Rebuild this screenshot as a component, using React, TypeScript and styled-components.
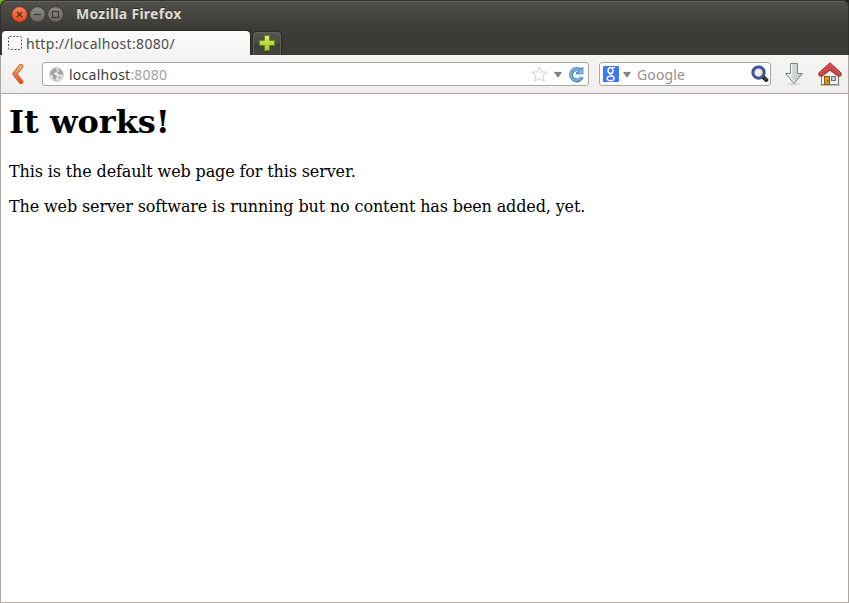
import React from "react";
import styled, { createGlobalStyle } from "styled-components";

const GlobalStyle = createGlobalStyle`
  *, *::before, *::after { box-sizing: border-box; }
  html, body { margin: 0; padding: 0; background: #fff; }
  svg { display: block; flex: none; }
`;

const Window = styled.div`
  width: 849px;
  height: 603px;
  display: flex;
  flex-direction: column;
  overflow: hidden;
  background: linear-gradient(135deg, #73b71b 0 5px, #242522 6px);
  font-family: "Noto Sans", "Open Sans", sans-serif;
`;

const Chrome = styled.div`
  height: 55px;
  flex: none;
  border: 1px solid #31302c;
  border-bottom: 0;
  border-radius: 6px 6px 0 0;
  background: linear-gradient(#64635b 0 1px, #504f49 1px, #3c3b37 27px);
`;

const TitleBar = styled.header`
  height: 27px;
  display: flex;
  align-items: center;
  padding-left: 10px;
`;

const Controls = styled.div`
  display: flex;
  gap: 1px;
`;

const Label = styled.span<{ $size: number; $spacing?: number; $color: string; $bold?: boolean }>`
  font-size: ${(p) => p.$size}px;
  line-height: 20px;
  letter-spacing: ${(p) => p.$spacing ?? 0}px;
  color: ${(p) => p.$color};
  font-weight: ${(p) => (p.$bold ? 700 : 400)};
  white-space: pre;
`;

const Title = styled(Label)`
  margin: -2px 0 0 12px;
  text-shadow: 0 -1px #302f2b;
`;

const FieldText = styled(Label)`
  padding-top: 2px;
`;

const TabStrip = styled.nav`
  height: 27px;
  display: flex;
  align-items: flex-end;
  gap: 3px;
  padding-left: 1px;
`;

const Tab = styled.div`
  width: 248px;
  height: 24px;
  display: flex;
  align-items: center;
  gap: 4px;
  padding: 0 5px;
  border-top: 1px solid #fff;
  border-radius: 4px 4px 0 0;
  background: linear-gradient(#fbfbfb, #f5f4f2);
  box-shadow: 1px -1px 1px #282824;
`;

const NewTab = styled.div`
  width: 28px;
  height: 23px;
  display: flex;
  align-items: flex-start;
  justify-content: flex-start;
  padding: 2px 0 0 5px;
  border: 1px solid #64625c;
  border-bottom: 0;
  border-radius: 4px 4px 0 0;
  background: linear-gradient(#57564f 0, #494842 50%, #3e3d38 50%, #44433e);
  box-shadow: 0 0 1px 1px #2b2a26;
`;

const ToolBar = styled.div`
  height: 39px;
  flex: none;
  display: flex;
  align-items: center;
  padding: 0 6px 0 10px;
  border: solid #aea79f;
  border-width: 0 1px 1px;
  background: linear-gradient(#f6f5f3, #f0efee);
`;

const Field = styled.div<{ $width: number; $left: number }>`
  width: ${(p) => p.$width}px;
  height: 24px;
  margin-left: ${(p) => p.$left}px;
  display: flex;
  align-items: center;
  border: 1px solid #aaa7a1;
  border-radius: 3px;
  background: #fff;
`;

const Grow = styled.div`
  flex: 1;
`;

const Gap = styled.div<{ $w: number }>`
  width: ${(p) => p.$w}px;
  flex: none;
`;

const Page = styled.main`
  flex: 1;
  padding: 9px 8px 8px;
  border: solid #aea79f;
  border-width: 0 1px 1px;
  background: #fff;
  color: #000;
  font: 16px/19px "DejaVu Serif", serif;
`;

const Heading = styled.h1`
  margin: 0 0 21px;
  font-size: 32px;
  line-height: 38px;
  font-weight: 700;
`;

const Paragraph = styled.p`
  margin: 0 0 16px;
  letter-spacing: -0.13px;
`;

type Kind = "close" | "minimize" | "maximize";

const WindowButton = ({ kind }: { kind: Kind }) => {
  const close = kind === "close";
  return (
    <svg width="17" height="17" viewBox="0 0 17 17">
      <defs>
        <linearGradient id={`wb-${kind}`} x2="0" y2="1">
          <stop offset="0" stopColor={close ? "#f7855f" : "#8f8d84"} />
          <stop offset="1" stopColor={close ? "#df4a16" : "#66655e"} />
        </linearGradient>
      </defs>
      <circle cx="8.5" cy="8.5" r="7.8" fill={`url(#wb-${kind})`} stroke={close ? "#66301f" : "#33322e"} strokeWidth=".8" />
      <g fill="none" stroke={close ? "#54200f" : "#383732"} strokeWidth="1.2">
        {close && <path d="M5.8 5.8l5.4 5.4M11.2 5.8l-5.4 5.4" />}
        {kind === "minimize" && <path d="M5 8.5h7" />}
        {kind === "maximize" && <rect x="5.5" y="5.5" width="6" height="6" />}
      </g>
    </svg>
  );
};

const PlusIcon = () => (
  <svg width="17" height="17" viewBox="0 0 17 17">
    <defs>
      <linearGradient id="plus" x2="0" y2="1">
        <stop offset="0" stopColor="#e2ee78" />
        <stop offset=".5" stopColor="#bcd545" />
        <stop offset="1" stopColor="#a2c52f" />
      </linearGradient>
    </defs>
    <path d="M5.5.5h5v5h5v5h-5v5h-5v-5h-5v-5h5z" fill="url(#plus)" stroke="#5b8a16" />
  </svg>
);

const BackIcon = () => (
  <svg width="14" height="20" viewBox="0 0 14 20">
    <defs>
      <linearGradient id="back" x2="0" y2="1">
        <stop offset="0" stopColor="#f6ad73" />
        <stop offset="1" stopColor="#e9541c" />
      </linearGradient>
    </defs>
    <path d="M10 2.2L3.8 9.9l6.2 7.9" fill="none" stroke="#c35724" strokeWidth="4.6" strokeLinecap="round" strokeLinejoin="round" />
    <path d="M10 2.2L3.8 9.9l6.2 7.9" fill="none" stroke="url(#back)" strokeWidth="3.1" strokeLinecap="round" strokeLinejoin="round" />
  </svg>
);

const GlobeIcon = () => (
  <svg width="15" height="15" viewBox="0 0 15 15">
    <circle cx="7.5" cy="7.5" r="6.8" fill="#e4e4e4" stroke="#b5b5b5" strokeWidth=".8" />
    <path d="M1 7L2 3.7 4.5 1.5l3-.5-.5 1.8 1.8.6-1.6 1.8-1.8.2-.8 2 2.4.6 1 2-1.3 1.5-.5 2.2L4 11.5 3.8 9zM9.5 1.5l2.4 1.4 1.8 3-.3 2.6-1.8-1.3-2.1.4-1.2-1.8 1.7-1.2zM10.2 9.3l2 .3-1.4 2-1.5.2z" fill="#a3a3a3" />
  </svg>
);

const StarIcon = () => (
  <svg width="17" height="17" viewBox="0 0 17 17">
    <path d="M8.5.9l2.2 4.9 5.2.5-3.9 3.5 1.2 5.4-4.7-2.7-4.7 2.7L5 9.8 1.1 6.3l5.2-.5z" fill="#fff" stroke="#cfcfcf" strokeLinejoin="round" />
  </svg>
);

const DropIcon = () => (
  <svg width="8" height="8" viewBox="0 0 8 8">
    <path d="M.7 2.4h6.6L4 7.1z" fill="#858585" stroke="#686868" strokeWidth=".8" />
  </svg>
);

const ReloadIcon = () => (
  <svg width="16" height="17" viewBox="0 0 16 17">
    <path d="M13.9 11.2A5.7 5.7 0 1 1 10.4 3.2" fill="none" stroke="#4a83bd" strokeWidth="4" />
    <path d="M15.4.8v7.4H8V6.4l2.2-1.2L9.4 1.2l3.8 1z" fill="#4a83bd" />
    <path d="M14.5 2.6v4.7H9.8l2.4-2z" fill="#9cc3e4" />
    <path d="M13 11.2A5.5 5.5 0 1 1 9.8 3.2l3.2 1.8" fill="none" stroke="#80b0da" strokeWidth="2.2" />
  </svg>
);

const GoogleBadge = () => (
  <svg width="16" height="16" viewBox="0 0 16 16">
    <rect width="16" height="16" rx="1" fill="#3f78f5" />
    <g fill="none" stroke="#fff">
      <ellipse cx="7.5" cy="4.6" rx="2.5" ry="2.9" strokeWidth="1.5" />
      <path d="M8.5 1.5h3.6" strokeWidth="1.1" />
      <path d="M7.6 7.5c-1.2 1 .2 1.6 1.7 2.4 3.2 1.8 1.8 4.8-1.6 4.8-4 0-5-3.2-1.8-4.2 1-.3 1.8-.4 2.7-.4" strokeWidth="1.4" />
    </g>
  </svg>
);

const SearchIcon = () => (
  <svg width="18" height="18" viewBox="0 0 18 18">
    <path d="M12 12l3.3 3" stroke="#252525" strokeWidth="4" strokeLinecap="round" />
    <path d="M13.6 13l1.8 1.6" stroke="#777" strokeWidth="1" />
    <circle cx="7.5" cy="7.6" r="5.6" fill="#f3f3ed" stroke="#24367c" strokeWidth="3" />
    <circle cx="7.5" cy="7.6" r="5.7" fill="none" stroke="#5268b4" strokeWidth="1.2" />
    <circle cx="7.5" cy="7.6" r="3.8" fill="none" stroke="#b8bdcc" strokeWidth=".7" />
  </svg>
);

const DownloadIcon = () => (
  <svg width="20" height="24" viewBox="0 0 20 24">
    <defs>
      <linearGradient id="down" x2="1" y2="0">
        <stop offset="0" stopColor="#e6eaea" />
        <stop offset="1" stopColor="#b8c2c5" />
      </linearGradient>
    </defs>
    <ellipse cx="10" cy="22" rx="7" ry="1.4" fill="#dcdad7" />
    <path d="M6.5 1.5h7v10h4.9L10 21.5 1.6 11.5h4.9z" fill="url(#down)" stroke="#7d8587" strokeLinejoin="round" />
    <path d="M7.5 2.5v10H4L10 20" fill="none" stroke="#fff" strokeWidth=".8" />
  </svg>
);

const HomeIcon = () => (
  <svg width="24" height="24" viewBox="0 0 24 24">
    <path d="M3.5 11L12 3l8.5 8v11.5h-17z" fill="#f2f2ef" stroke="#777873" />
    <path d="M2 23.2h20" stroke="#a5a5a0" />
    <rect x="6.5" y="14.5" width="5" height="8" fill="#dc9721" stroke="#8b5c08" />
    <path d="M10 18v2" stroke="#754800" />
    <rect x="13.5" y="14.5" width="4" height="4" fill="#bed0de" stroke="#637887" />
    <path d="M12 .8L.9 10.9v2.6l1.3.6h2L12 8.2l7.8 5.9h2l1.3-.6v-2.6z" fill="#cf4547" stroke="#a52b2d" strokeLinejoin="round" />
    <path d="M2 11.3l10-9.1 10 9.1" fill="none" stroke="#dc6663" strokeWidth=".8" />
  </svg>
);

const PlaceholderIcon = () => (
  <svg width="15" height="15" viewBox="0 0 15 15">
    <rect x="1.5" y=".5" width="13" height="13" rx="1" fill="none" stroke="#555" strokeDasharray="2 1.6" />
  </svg>
);

export default function App() {
  return (
    <>
      <GlobalStyle />
      <Window>
        <Chrome>
          <TitleBar>
            <Controls>
              <WindowButton kind="close" />
              <WindowButton kind="minimize" />
              <WindowButton kind="maximize" />
            </Controls>
            <Title $size={14} $spacing={0.27} $color="#dfdbd2" $bold>Mozilla Firefox</Title>
          </TitleBar>
          <TabStrip>
            <Tab>
              <PlaceholderIcon />
              <Label $size={14} $spacing={0.33} $color="#4c4c4c">http://localhost:8080/</Label>
            </Tab>
            <NewTab><PlusIcon /></NewTab>
          </TabStrip>
        </Chrome>
        <ToolBar>
          <BackIcon />
          <Field $width={547} $left={17}>
            <Gap $w={6} />
            <GlobeIcon />
            <Gap $w={5} />
            <FieldText $size={14} $spacing={0.25} $color="#3c3c3c">localhost</FieldText>
            <FieldText $size={14} $spacing={0.2} $color="#a0a0a0">:8080</FieldText>
            <Grow />
            <StarIcon />
            <Gap $w={6} />
            <DropIcon />
            <Gap $w={6} />
            <ReloadIcon />
            <Gap $w={4} />
          </Field>
          <Field $width={172} $left={10}>
            <Gap $w={3} />
            <GoogleBadge />
            <Gap $w={4} />
            <DropIcon />
            <Gap $w={6} />
            <FieldText $size={14} $spacing={0.15} $color="#929292">Google</FieldText>
            <Grow />
            <SearchIcon />
            <Gap $w={1} />
          </Field>
          <Gap $w={13} />
          <DownloadIcon />
          <Grow />
          <HomeIcon />
        </ToolBar>
        <Page>
          <Heading>It works!</Heading>
          <Paragraph>This is the default web page for this server.</Paragraph>
          <Paragraph>The web server software is running but no content has been added, yet.</Paragraph>
        </Page>
      </Window>
    </>
  );
}
